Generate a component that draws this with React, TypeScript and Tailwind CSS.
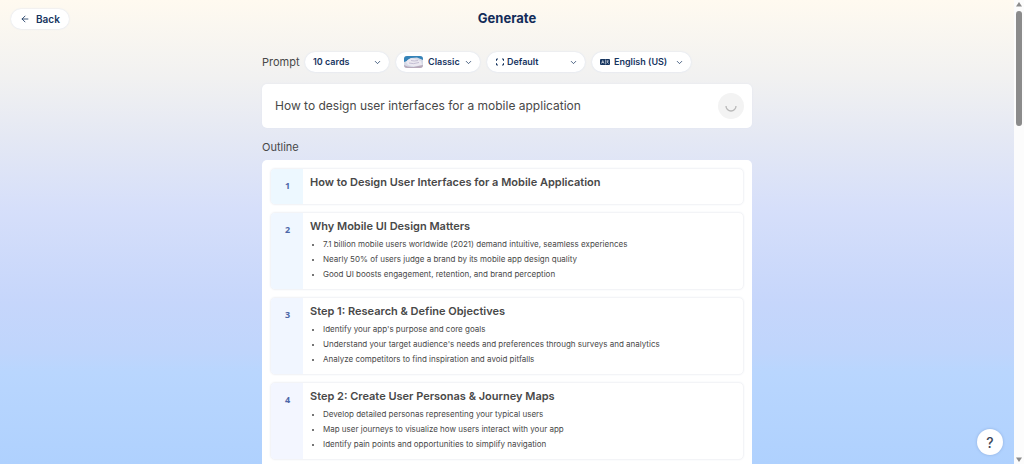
import React, { useState } from "react";
import { ArrowLeft, ChevronDown } from "lucide-react";

type Card = {
  title: string;
  bullets: string[];
  tint: string;
};

const cards: Card[] = [
  {
    title: "How to Design User Interfaces for a Mobile Application",
    bullets: [],
    tint: "bg-[#edf8ff]"
  },
  {
    title: "Why Mobile UI Design Matters",
    bullets: [
      "7.1 billion mobile users worldwide (2021) demand intuitive, seamless experiences",
      "Nearly 50% of users judge a brand by its mobile app design quality",
      "Good UI boosts engagement, retention, and brand perception"
    ],
    tint: "bg-[#f0f7ff]"
  },
  {
    title: "Step 1: Research & Define Objectives",
    bullets: [
      "Identify your app's purpose and core goals",
      "Understand your target audience's needs and preferences through surveys and analytics",
      "Analyze competitors to find inspiration and avoid pitfalls"
    ],
    tint: "bg-[#f1f6ff]"
  },
  {
    title: "Step 2: Create User Personas & Journey Maps",
    bullets: [
      "Develop detailed personas representing your typical users",
      "Map user journeys to visualize how users interact with your app",
      "Identify pain points and opportunities to simplify navigation"
    ],
    tint: "bg-[#f3f6ff]"
  }
];

function ThemeThumb() {
  return (
    <svg viewBox="0 0 19 12" className="h-3 w-[19px]" aria-hidden="true">
      <clipPath id="thumb">
        <rect width="19" height="12" rx="3" />
      </clipPath>
      <g clipPath="url(#thumb)">
        <rect width="19" height="12" fill="#d5d9e6" />
        <path d="M0 0H19V4L13 1.5 7 2 3 5 0 6Z" fill="#3583b8" />
        <path d="M2 6Q5 1.5 9 2.5T17 5L18 9 10 10.5 4 9Z" fill="#ece9f1" />
        <path d="M5 7Q9 8.500 15 6.500M7 4.500Q10 5.500 14 4.500" fill="none" stroke="#b9b4cb" strokeWidth=".8" />
        <path d="M0 9Q5 12 12 10.500L19 9V12H0Z" fill="#b8aabb" />
      </g>
    </svg>
  );
}

function FrameIcon() {
  return (
    <svg viewBox="0 0 10 8" className="h-2 w-2.5" fill="none" stroke="#17355f" strokeWidth="1" aria-hidden="true">
      <path d="M3 1H1.500V2.800M1.500 5.200V7H3M7 1H8.500V2.800M8.500 5.200V7H7" />
    </svg>
  );
}

function LanguageIcon() {
  return (
    <svg viewBox="0 0 10 8" className="h-2 w-2.5" aria-hidden="true">
      <rect y="1" width="10" height="6" rx="1" fill="#17355f" />
      <path d="M1.500 5.500 2.750 2.500 4 5.500M2 4.500H3.500" fill="none" stroke="#fff" strokeWidth=".6" />
      <path d="M5.500 1.500V6.500" stroke="#fff" strokeWidth=".5" />
      <path d="M6.300 3H9M7.600 2.400V3Q7.600 4.600 6.400 5.500M6.900 3.800Q7.600 5 8.900 5.500" fill="none" stroke="#fff" strokeWidth=".5" />
    </svg>
  );
}

type PillProps = {
  label: string;
  value: string;
  width: string;
  padding: string;
  icon?: React.ReactNode;
};

function PillSelect({ label, value, width, padding, icon }: PillProps) {
  return (
    <div className={`relative flex h-5 ${width}`}>
      {icon && (
        <span className="pointer-events-none absolute inset-y-0 left-2 flex items-center">
          {icon}
        </span>
      )}
      <select
        aria-label={label}
        className={`w-full appearance-none rounded-full bg-white text-[9px] font-semibold text-[#17355f] shadow-[0_0_2px_#d5deef] outline-none ${padding}`}
      >
        <option>{value}</option>
      </select>
      <ChevronDown
        size={9}
        className="pointer-events-none absolute inset-y-0 right-[7px] my-auto text-[#17355f]"
      />
    </div>
  );
}

function OutlineCard({ card, index }: { card: Card; index: number }) {
  return (
    <li className="flex min-h-[37px] overflow-hidden rounded-[5px] border border-[#f3f4f7] shadow-[0_0_2px_#f0f2f6]">
      <div className={`w-8 shrink-0 pt-[11px] pl-px text-center font-['Noto_Sans'] text-[9px] leading-3 font-bold text-[#4d67a8] ${card.tint}`}>
        {index + 1}
      </div>
      <div className="min-w-0 flex-1 px-[7px] pt-[5px] pb-[7px]">
        <h3 className="text-[11px] leading-4 font-semibold">{card.title}</h3>
        {card.bullets.length > 0 && (
          <ul className="mt-[3px] list-disc pl-[13px] text-[8px] leading-[15px]">
            {card.bullets.map((bullet) => (
              <li key={bullet} className="marker:text-[6px]">
                {bullet}
              </li>
            ))}
          </ul>
        )}
      </div>
    </li>
  );
}

export default function App() {
  const [prompt, setPrompt] = useState(
    "How to design user interfaces for a mobile application"
  );

  return (
    <div className="flex h-screen overflow-hidden font-['Inter',sans-serif] text-[#484848]">
      <div className="relative min-w-0 flex-1 overflow-hidden bg-[linear-gradient(#fffaf0_0%,#f1f1f1_17%,#e4e8f4_30%,#d6dffa_45%,#c6d6fb_65%,#bfd5fc_76%,#b9d6fe_80%,#afd1fe_100%)]">
        <header className="relative flex h-[38px] items-center justify-center">
          <button className="absolute left-[11px] flex h-5 items-center gap-1.5 rounded-full bg-white px-[9px] text-[10px] font-semibold text-[#17355f] shadow-[0_0_2px_#d5deef]">
            <ArrowLeft size={10} />
            Back
          </button>
          <h1 className="text-[13px] font-bold text-[#122c59]">Generate</h1>
        </header>

        <main className="mx-auto w-[48%] min-w-[490px]">
          <div className="mt-3.5 flex items-center">
            <label htmlFor="prompt" className="mr-1 w-[39px] text-[11px] leading-4">
              Prompt
            </label>
            <div className="flex gap-[7px]">
              <PillSelect label="Cards" value="10 cards" width="w-[84px]" padding="px-2" />
              <PillSelect label="Theme" value="Classic" width="w-[84px]" padding="pl-8" icon={<ThemeThumb />} />
              <PillSelect label="Size" value="Default" width="w-[98px]" padding="pl-5" icon={<FrameIcon />} />
              <PillSelect label="Language" value="English (US)" width="w-[99px]" padding="pl-[22px]" icon={<LanguageIcon />} />
            </div>
          </div>

          <div className="mt-3 flex h-[44px] items-center rounded-[5px] bg-white pr-2 pl-[13px] shadow-[0_0_2px_#e0e5f0]">
            <input
              id="prompt"
              value={prompt}
              onChange={(e) => setPrompt(e.target.value)}
              className="min-w-0 flex-1 bg-transparent text-[12px] outline-none"
            />
            <button aria-label="Generating" className="flex size-[26px] items-center justify-center rounded-full bg-[#f3f3f3]">
              <svg viewBox="0 0 12 12" className="size-3" fill="none" stroke="#b8b8b8" strokeWidth="1.300" aria-hidden="true">
                <path d="M1 6A5 5 0 0 0 11 6" />
              </svg>
            </button>
          </div>

          <h2 className="mt-[11px] text-[11px] leading-4">Outline</h2>
          <ol className="mt-[5px] flex flex-col gap-[7px] rounded-[5px] bg-white p-2">
            {cards.map((card, index) => (
              <OutlineCard key={card.title} card={card} index={index} />
            ))}
          </ol>
        </main>

        <button
          aria-label="Help"
          className="absolute right-[11px] bottom-[9px] size-[26px] rounded-full bg-white text-[14px] font-medium text-[#3d4759] shadow-[0_0_3px_#8eaede]"
        >
          ?
        </button>
      </div>

      <div className="flex w-2.5 flex-col items-center bg-[#fcfcfc] py-px" aria-hidden="true">
        <svg viewBox="0 0 8 6" className="h-1.5 w-2 shrink-0" fill="#8b8b8b">
          <path d="M4 1 7 5.500H1Z" />
        </svg>
        <div className="mt-1 h-[115px] w-1.5 rounded-full bg-[#8b8b8b]" />
        <svg viewBox="0 0 8 6" className="mt-auto h-1.5 w-2 shrink-0" fill="#8b8b8b">
          <path d="M4 5 7 .5H1Z" />
        </svg>
      </div>
    </div>
  );
}
